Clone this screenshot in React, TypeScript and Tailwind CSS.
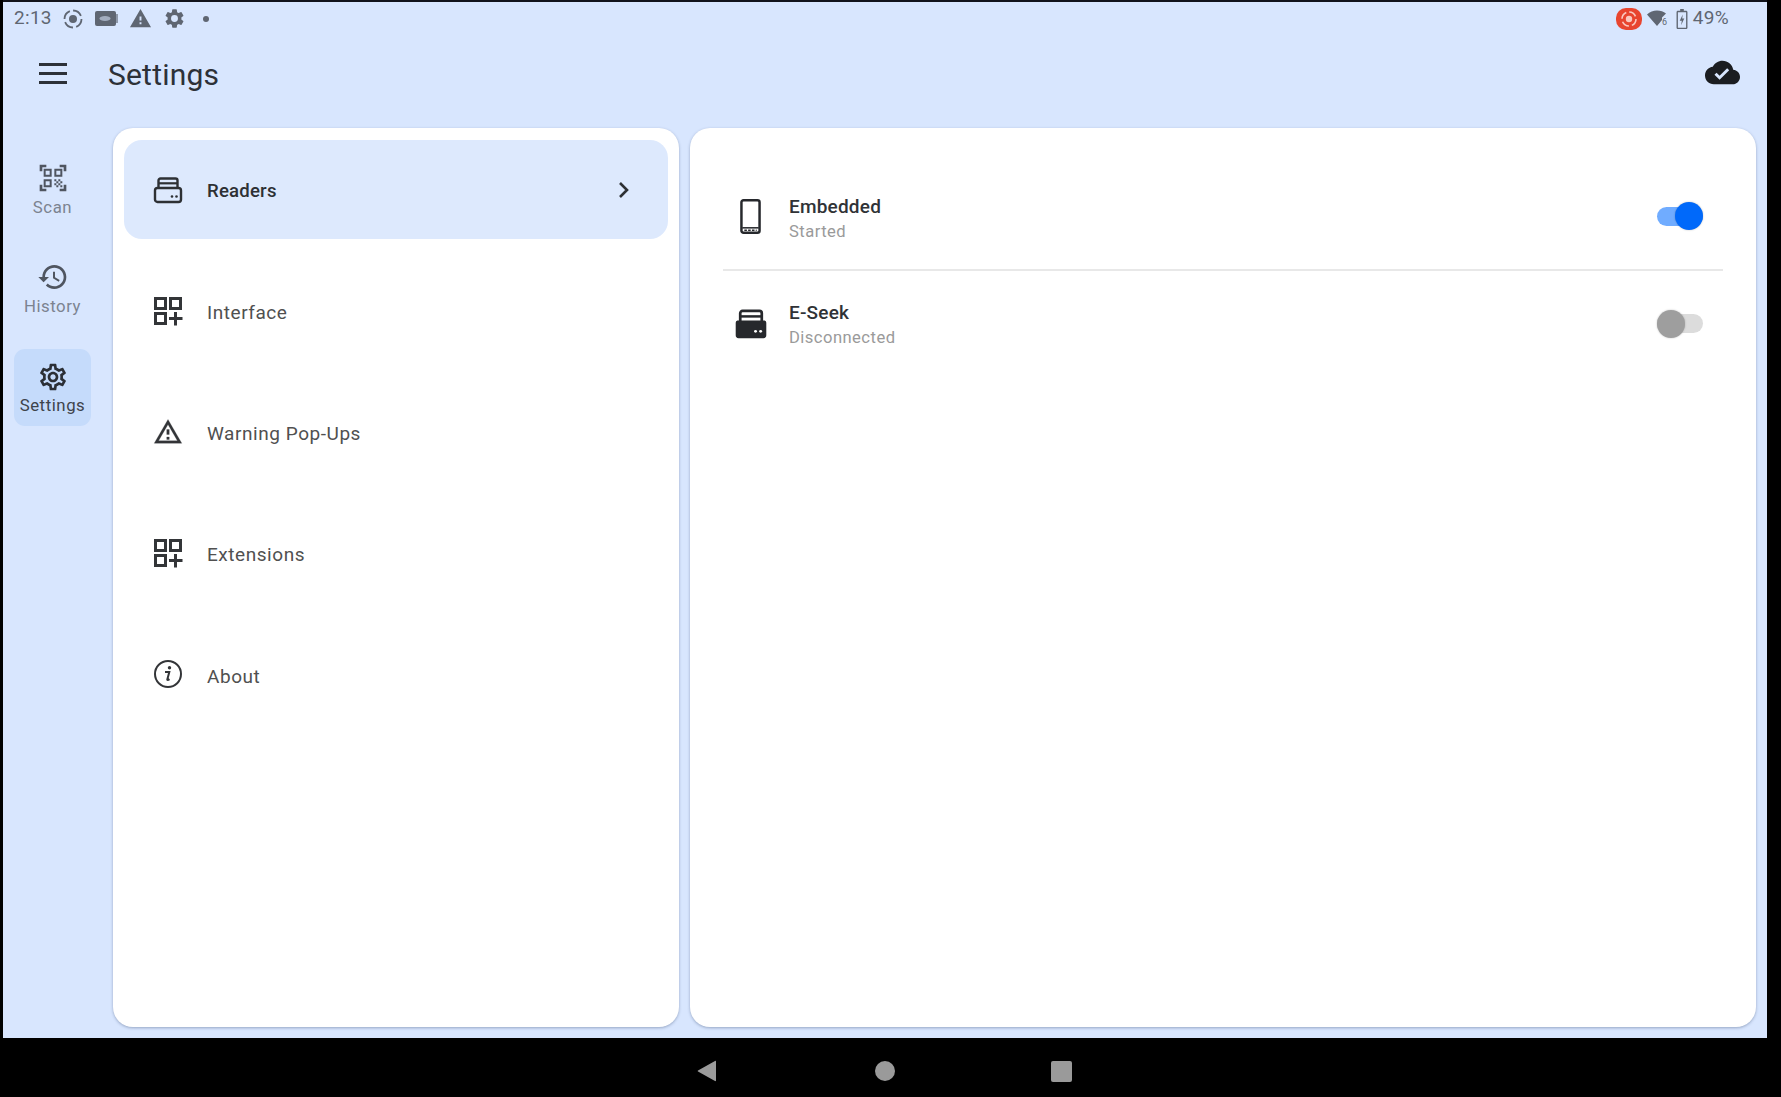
import type { ReactNode } from 'react'

function Icon({ size = 28, box = 24, className = '', children }: { size?: number; box?: number; className?: string; children: ReactNode }) {
  return (
    <svg width={size} height={size} viewBox={`0 0 ${box} ${box}`} fill="currentColor" className={className}>
      {children}
    </svg>
  )
}

const gearPath =
  'M19.43 12.98c.04-.32.07-.64.07-.98 0-.34-.03-.66-.07-.98l2.11-1.65c.19-.15.24-.42.12-.64l-2-3.46c-.09-.16-.26-.25-.44-.25-.06 0-.12.01-.17.03l-2.49 1c-.52-.4-1.08-.73-1.69-.98l-.38-2.65C14.46 2.18 14.25 2 14 2h-4c-.25 0-.46.18-.49.42l-.38 2.65c-.61.25-1.17.59-1.69.98l-2.49-1c-.06-.02-.12-.03-.18-.03-.17 0-.34.09-.43.25l-2 3.46c-.13.22-.07.49.12.64l2.11 1.65c-.04.32-.07.65-.07.98 0 .33.03.66.07.98l-2.11 1.65c-.19.15-.24.42-.12.64l2 3.46c.09.16.26.25.44.25.06 0 .12-.01.17-.03l2.49-1c.52.4 1.08.73 1.69.98l.38 2.65c.03.24.24.42.49.42h4c.25 0 .46-.18.49-.42l.38-2.65c.61-.25 1.17-.59 1.69-.98l2.49 1c.06.02.12.03.18.03.17 0 .34-.09.43-.25l2-3.46c.12-.22.07-.49-.12-.64l-2.11-1.65zm-1.98-1.71c.04.31.05.52.05.73 0 .21-.02.43-.05.73l-.14 1.13.89.7 1.08.84-.7 1.21-1.27-.51-1.04-.42-.9.68c-.43.32-.84.56-1.25.73l-1.06.43-.16 1.13-.2 1.35h-1.4l-.19-1.35-.16-1.13-1.06-.43c-.43-.18-.83-.41-1.23-.71l-.91-.7-1.06.43-1.27.51-.7-1.21 1.08-.84.89-.7-.14-1.13c-.03-.31-.05-.54-.05-.74s.02-.43.05-.73l.14-1.13-.89-.7-1.08-.84.7-1.21 1.27.51 1.04.42.9-.68c.43-.32.84-.56 1.25-.73l1.06-.43.16-1.13.2-1.35h1.39l.19 1.35.16 1.13 1.06.43c.43.18.83.41 1.23.71l.91.7 1.06-.43 1.27-.51.7 1.21-1.07.85-.89.7.14 1.13zM12 8c-2.21 0-4 1.79-4 4s1.79 4 4 4 4-1.79 4-4-1.79-4-4-4zm0 6c-1.1 0-2-.9-2-2s.9-2 2-2 2 .9 2 2-.9 2-2 2z'

function GearFilled({ size = 22 }: { size?: number }) {
  return (
    <Icon size={size}>
      <path d="M19.14 12.94c.04-.3.06-.61.06-.94 0-.32-.02-.64-.07-.94l2.03-1.58a.49.49 0 0 0 .12-.61l-1.92-3.32a.49.49 0 0 0-.59-.22l-2.39.96c-.5-.38-1.03-.7-1.62-.94l-.36-2.54a.48.48 0 0 0-.48-.41h-3.84a.47.47 0 0 0-.47.41l-.36 2.54c-.59.24-1.13.57-1.62.94l-2.39-.96a.48.48 0 0 0-.59.22L2.74 8.87a.47.47 0 0 0 .12.61l2.03 1.58c-.05.3-.09.63-.09.94s.02.64.07.94l-2.03 1.58a.49.49 0 0 0-.12.61l1.92 3.32c.12.22.37.29.59.22l2.39-.96c.5.38 1.03.7 1.62.94l.36 2.54c.05.24.24.41.48.41h3.84c.24 0 .44-.17.47-.41l.36-2.54c.59-.24 1.13-.56 1.62-.94l2.39.96c.22.08.47 0 .59-.22l1.92-3.32a.47.47 0 0 0-.12-.61l-2.01-1.58zM12 15.6A3.6 3.6 0 1 1 12 8.4a3.6 3.6 0 0 1 0 7.2z" />
    </Icon>
  )
}

function StatusBar() {
  return (
    <div className="h-[33px] flex items-center justify-between text-[#5f6672] pl-[11px] pr-[38px]">
      <div className="flex items-center">
        <span className="text-[19px] tracking-[0.3px] w-[48px]">2:13</span>
        <svg width="22" height="22" viewBox="0 0 22 22" fill="none" stroke="currentColor" className="mr-[11px]">
          <circle cx="11" cy="11" r="4" fill="currentColor" stroke="none" />
          <circle cx="11" cy="11" r="8.5" strokeWidth="1.8" strokeDasharray="10 3.3" />
        </svg>
        <svg width="24" height="17" viewBox="0 0 24 17" className="mr-[10px]">
          <rect x="0" y="1" width="21" height="15" rx="2" fill="currentColor" />
          <rect x="21" y="4" width="2" height="9" fill="currentColor" opacity=".6" />
          <ellipse cx="10" cy="8.5" rx="5.5" ry="2.6" fill="#d8e6fe" opacity=".55" />
        </svg>
        <Icon size={23} className="mr-[11px]">
          <path d="M1 21h22L12 2 1 21zm12-3h-2v-2h2v2zm0-4h-2v-4h2v4z" />
        </Icon>
        <GearFilled size={23} />
        <span className="w-[6px] h-[6px] rounded-full bg-current ml-[17px]" />
      </div>
      <div className="flex items-center">
        <div className="w-[26px] h-[22px] rounded-[10px] bg-[#e8452f] flex items-center justify-center mr-[5px]">
          <svg width="18" height="18" viewBox="0 0 18 18" fill="none" stroke="#f9c9c0">
            <circle cx="9" cy="9" r="3.2" fill="#f9c9c0" stroke="none" />
            <circle cx="9" cy="9" r="7" strokeWidth="1.6" strokeDasharray="8 3" />
          </svg>
        </div>
        <svg width="21" height="17" viewBox="0 0 21 17" className="mr-[8px]">
          <path d="M0 4.5C2.8 1.8 6.4.5 10 .5s6.6 1 9 3l-4 4v2.500L10 16 0 4.500z" fill="currentColor" />
          <text x="15" y="15" fontSize="9" fill="currentColor" fontFamily="Roboto, sans-serif">6</text>
        </svg>
        <svg width="12" height="20" viewBox="0 0 12 22" className="mr-[5px]">
          <path d="M4 0h4v2h2.500C11.300 2 12 2.700 12 3.500V20.500c0 .8-.7 1.500-1.500 1.500h-9C.7 22 0 21.300 0 20.500V3.500C0 2.700.7 2 1.500 2H4V0zM1.500 3.500v17h9v-17h-9z" fill="currentColor" />
          <path d="M6.800 6L3.500 13h2.300L5 18l3.500-7.500H6.200L6.800 6z" fill="currentColor" />
        </svg>
        <span className="text-[19px] tracking-[0.3px]">49%</span>
      </div>
    </div>
  )
}

function RailItem({ label, active, children }: { label: string; active?: boolean; children: ReactNode }) {
  return (
    <div className={`w-[77px] h-[77px] rounded-[11px] flex flex-col items-center pt-[12px] ${active ? 'bg-[#c5dbfb]' : ''}`}>
      <div className={`h-[32px] ${active ? 'text-[#2b2f36]' : 'text-[#4f5560]'}`}>{children}</div>
      <span className={`text-[16.8px] leading-[20px] tracking-[0.55px] mt-[2px] ${active ? 'text-[#3e434b]' : 'text-[#7c8390]'}`}>{label}</span>
    </div>
  )
}

function ReaderIcon({ filled, size = 30 }: { filled?: boolean; size?: number }) {
  return (
    <svg width={size} height={size} viewBox="0 0 30 30">
      <path d="M5.500 13V5.500a2 2 0 0 1 2-2h15a2 2 0 0 1 2 2V13" fill="none" stroke="currentColor" strokeWidth="2.400" />
      <path d="M5.500 8.300h19" stroke="currentColor" strokeWidth="2.200" />
      {filled ? (
        <path d="M3 12h24a2 2 0 0 1 1.500 2v11a2.500 2.500 0 0 1-2.500 2.500H4A2.500 2.500 0 0 1 1.500 25V14A2 2 0 0 1 3 12z" fill="currentColor" />
      ) : (
        <rect x="2" y="13" width="26" height="14" rx="2.500" fill="none" stroke="currentColor" strokeWidth="2.400" />
      )}
      <circle cx="19" cy="21.500" r="1.300" fill={filled ? '#fff' : 'currentColor'} />
      <circle cx="23.500" cy="21.500" r="1.300" fill={filled ? '#fff' : 'currentColor'} />
    </svg>
  )
}

function GridPlusIcon() {
  return (
    <svg width="30" height="30" viewBox="0 0 30 30" fill="none" stroke="currentColor" strokeWidth="3">
      <rect x="2.500" y="2.500" width="10" height="10" />
      <rect x="17.500" y="2.500" width="10" height="10" />
      <rect x="2.500" y="17.500" width="10" height="10" />
      <path d="M16 22.500h13.500M22.500 16v13.500" />
    </svg>
  )
}

function InfoIcon() {
  return (
    <svg width="30" height="30" viewBox="0 0 30 30" fill="none">
      <circle cx="15" cy="15" r="13" stroke="currentColor" strokeWidth="2" />
      <circle cx="16.500" cy="8.800" r="1.700" fill="currentColor" />
      <path d="M12 13h4.300l-2 7.500c-.1.600.5.800 2.200-.4" stroke="currentColor" strokeWidth="2" />
    </svg>
  )
}

const menuItems = [
  { label: 'Interface', icon: <GridPlusIcon /> },
  {
    label: 'Warning Pop-Ups',
    icon: (
      <Icon size={32}>
        <path d="M12 5.990L19.530 19H4.470L12 5.990M12 2L1 21h22L12 2zm1 14h-2v2h2v-2zm0-6h-2v4h2v-4z" stroke="currentColor" strokeWidth="0.2" />
      </Icon>
    ),
  },
  { label: 'Extensions', icon: <GridPlusIcon /> },
  { label: 'About', icon: <InfoIcon /> },
]

function Toggle({ on }: { on?: boolean }) {
  return (
    <div className="relative w-[46px] h-[28px] flex items-center">
      <div className={`w-full h-[19px] rounded-full ${on ? 'bg-[#70acff]' : 'bg-[#dcdcdc]'}`} />
      <div
        className={`absolute top-0 w-[28px] h-[28px] rounded-full shadow-[0_0_2px_rgba(0,0,0,0.25)] ${on ? 'right-0 bg-[#0069fa]' : 'left-0 bg-[#9e9e9e]'}`}
      />
    </div>
  )
}

function ReaderRow({ title, status, icon, on, first }: { title: string; status: string; icon: ReactNode; on?: boolean; first?: boolean }) {
  return (
    <div className={`flex items-center pr-[20px] ${first ? 'h-[108px] border-b-2 border-[#e8e8e8]' : 'h-[105px]'}`}>
      <div className="w-[66px] flex justify-center pr-[19px] pl-[8px] text-[#26282c]">{icon}</div>
      <div className={`flex-1 ${first ? 'pt-[7px]' : 'pt-[4px]'}`}>
        <div className="text-[19px] leading-[24px] font-medium tracking-[0.2px] text-[#303236]">{title}</div>
        <div className="text-[16.6px] leading-[24px] tracking-[0.45px] text-[#9a9a9a] mt-[1px]">{status}</div>
      </div>
      <Toggle on={on} />
    </div>
  )
}

export default function App() {
  return (
    <div className="w-[1781px] h-[1097px] bg-black flex flex-col font-['Roboto',sans-serif] overflow-hidden">
      <div className="h-[1038px] ml-[3px] mr-[14px] bg-[#d8e6fe] border-t-2 border-[#11131c] flex flex-col">
        <StatusBar />
        {/* top app bar */}
        <div className="h-[76px] mb-[17px] shrink-0 flex items-center justify-between pl-[36px] pr-[27px]">
          <div className="flex items-center">
            <svg width="28" height="21" viewBox="0 0 28 21" fill="none" stroke="#2d3138" strokeWidth="2.800">
              <path d="M0 1.500h28M0 10.500h28M0 19.500h28" />
            </svg>
            <h1 className="ml-[41px] text-[30px] text-[#2d3138] tracking-[0.2px] pt-[2px]">Settings</h1>
          </div>
          <Icon size={35} box={24} className="text-[#1b1d21] -mt-[1px]">
            <path d="M19.350 10.040C18.670 6.590 15.640 4 12 4 9.110 4 6.600 5.640 5.350 8.040 2.340 8.360 0 10.910 0 14c0 3.310 2.690 6 6 6h13c2.760 0 5-2.240 5-5 0-2.640-2.050-4.780-4.650-4.960zM10 17l-3.500-3.500 1.410-1.410L10 14.170 15.180 9l1.410 1.410L10 17z" />
          </Icon>
        </div>

        <div className="flex-1 min-h-0 flex pb-[11px]">
          {/* nav rail */}
          <div className="w-[110px] shrink-0 pt-[23px] pl-[11px] flex flex-col gap-[22px]">
            <RailItem label="Scan">
              <Icon size={32} className="-mt-[1px]">
                <path d="M9.500 6.500v3h-3v-3h3M11 5H5v6h6V5zm-1.500 9.500v3h-3v-3h3M11 13H5v6h6v-6zm6.500-6.500v3h-3v-3h3M19 5h-6v6h6V5zm-6 8h1.500v1.500H13V13zm1.500 1.500H16V16h-1.500v-1.500zM16 13h1.500v1.500H16V13zm-3 3h1.500v1.500H13V16zm1.500 1.500H16V19h-1.500v-1.500zM16 16h1.500v1.500H16V16zm1.500-1.500H19V16h-1.500v-1.500zm0 3H19V19h-1.500v-1.500zM22 7h-2V4h-3V2h5v5zm0 15v-5h-2v3h-3v2h5zM2 22h5v-2H4v-3H2v5zM2 2v5h2V4h3V2H2z" />
              </Icon>
            </RailItem>
            <RailItem label="History">
              <Icon size={32} className="-mt-[1px]">
                <path d="M13 3c-4.970 0-9 4.030-9 9H1l3.890 3.890.07.140L9 12H6c0-3.870 3.130-7 7-7s7 3.130 7 7-3.130 7-7 7c-1.930 0-3.680-.79-4.940-2.060l-1.420 1.420C8.270 19.990 10.510 21 13 21c4.970 0 9-4.030 9-9s-4.030-9-9-9zm-1 5v5l4.280 2.540.72-1.210-3.500-2.080V8H12z" />
              </Icon>
            </RailItem>
            <RailItem label="Settings" active>
              <Icon size={32}>
                <path d={gearPath} />
              </Icon>
            </RailItem>
          </div>

          {/* settings categories */}
          <div className="w-[566px] shrink-0 bg-white rounded-[20px] shadow-[0_1px_3px_rgba(50,70,110,0.4)] px-[11px] pt-[12px] flex flex-col gap-[22.2px]">
            <div className="h-[99px] shrink-0 rounded-[18px] bg-[#dde9fd] flex items-center pl-[29px] pr-[38px] text-[#2d3034]">
              <ReaderIcon />
              <span className="ml-[24px] flex-1 text-[18.6px] font-medium tracking-[0.2px] pt-[5px]">Readers</span>
              <svg width="12" height="18" viewBox="0 0 12 18" fill="none" stroke="currentColor" strokeWidth="2.600">
                <path d="M2 2l7 7-7 7" />
              </svg>
            </div>
            {menuItems.map((item) => (
              <div key={item.label} className="h-[99px] shrink-0 flex items-center pl-[29px] text-[#333538]">
                <div className="w-[30px] flex justify-center">{item.icon}</div>
                <span className="ml-[24px] text-[19px] tracking-[0.55px] text-[#505050] pt-[5px]">{item.label}</span>
              </div>
            ))}
          </div>

          {/* readers list */}
          <div className="flex-1 ml-[11px] mr-[11px] bg-white rounded-[20px] shadow-[0_1px_3px_rgba(50,70,110,0.4)] px-[33px] pt-[35px]">
            <ReaderRow
              title="Embedded"
              status="Started"
              on
              first
              icon={
                <svg width="21" height="35" viewBox="0 0 20 34" fill="none" stroke="currentColor">
                  <rect x="1.200" y="1.200" width="17.600" height="31.600" rx="2" strokeWidth="2.400" />
                  <path d="M2 28h16" strokeWidth="1.500" />
                  <path d="M4 30.300h12" strokeWidth="1.500" strokeDasharray="2.500 1.200" />
                </svg>
              }
            />
            <ReaderRow title="E-Seek" status="Disconnected" icon={<ReaderIcon filled size={34} />} />
          </div>
        </div>
      </div>

      {/* android nav bar */}
      <div className="flex-1 flex items-center justify-center pt-[7px] pr-[12px] text-[#9a9a9a]">
        <svg width="20" height="22" viewBox="0 0 20 22" fill="currentColor">
          <path d="M19 1.500v19c0 .6-.5.9-1 .6L1 11.500c-.5-.3-.5-.7 0-1L18 .9c.5-.3 1 0 1 .6z" />
        </svg>
        <div className="w-[20px] h-[20px] ml-[158px] rounded-full bg-current" />
        <div className="w-[21px] h-[21px] ml-[156px] rounded-[2px] bg-current" />
      </div>
    </div>
  )
}
